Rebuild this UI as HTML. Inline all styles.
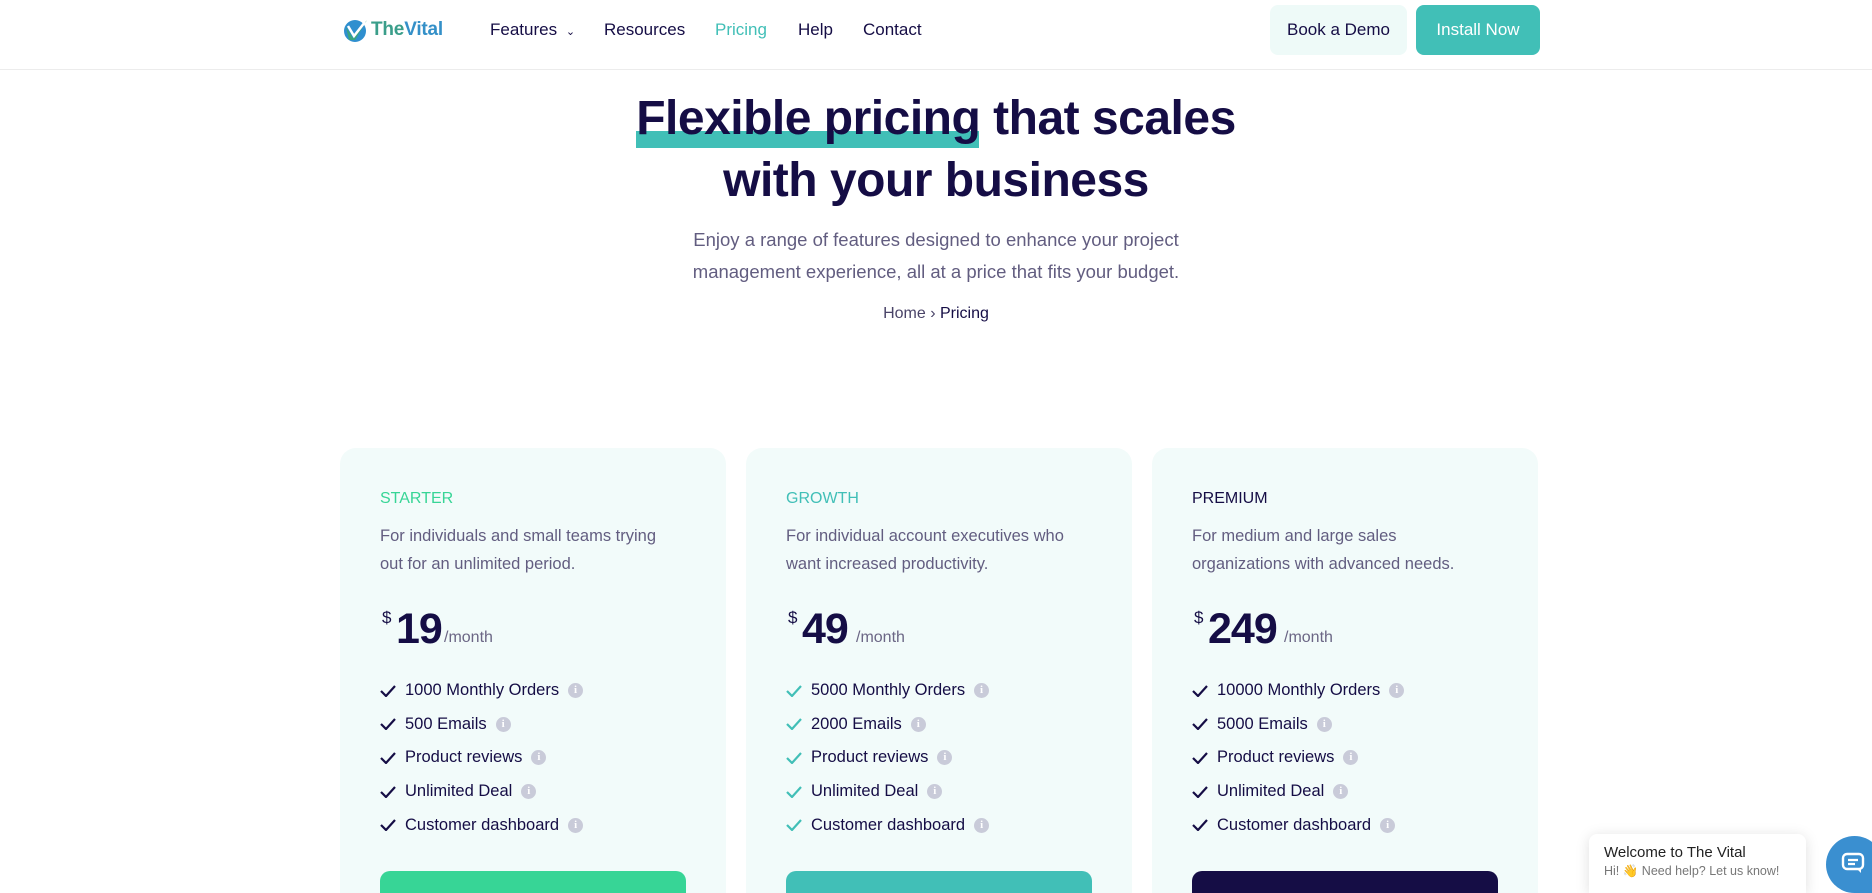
<!DOCTYPE html>
<html><head><meta charset="utf-8"><style>
*{margin:0;padding:0;box-sizing:border-box}
html,body{width:1872px;height:893px;overflow:hidden}
body{background:#fff;font-family:"Liberation Sans",sans-serif;color:#150d45;position:relative}
.abs{position:absolute}
.nav a{position:absolute;top:20px;font-size:17px;color:#150d45;text-decoration:none;white-space:nowrap}
.hdr{position:absolute;left:0;top:69px;width:1872px;height:1px;background:#ececec}
.btn{position:absolute;top:5px;height:50px;border-radius:8px;font-size:17px;display:flex;align-items:center;justify-content:center}
h1{position:absolute;left:0;width:1872px;top:88px;text-align:center;font-size:48px;letter-spacing:-0.5px;line-height:62px;font-weight:bold;color:#150d45}
.bar{position:absolute;left:636px;top:131px;width:343px;height:17px;background:#41bfb7}
.sub{position:absolute;left:0;width:1872px;top:224px;text-align:center;font-size:18.5px;line-height:32px;color:#625d80}
.bc{position:absolute;left:0;width:1872px;top:305px;text-align:center;font-size:16px;color:#4a4468}
.card{position:absolute;top:448px;width:386px;height:445px;background:#f2fbfa;border-radius:16px 16px 0 0;overflow:hidden}
.card .tt{position:absolute;left:40px;top:42px;font-size:16px}
.card .d{position:absolute;left:40px;top:74px;font-size:16.5px;line-height:28px;color:#625d80;width:290px}
.card .p{position:absolute;left:40px;top:160px;white-space:nowrap}
.p .s{position:absolute;left:2px;top:0px;font-size:17px}
.p .n{position:absolute;left:16px;top:-3px;font-size:43px;font-weight:bold;letter-spacing:-1px}
.p .m{position:absolute;top:21px;font-size:16px;color:#6b6685}
.card ul{position:absolute;left:40px;top:226px;list-style:none}
.card li{height:33.6px;display:flex;align-items:center;font-size:16.5px;color:#150d45;white-space:nowrap}
.card li svg.c{margin-right:9px}
.i{display:inline-block;width:15px;height:15px;border-radius:50%;background:#c9cbd9;color:#fff;font-size:11px;font-weight:bold;text-align:center;line-height:15px;margin-left:9px;font-family:"Liberation Serif",serif}
.cb{position:absolute;left:40px;top:423px;width:306px;height:60px;border-radius:10px}
</style></head><body>
<svg class="abs" style="left:343px;top:18px" width="26" height="25" viewBox="0 0 26 25"><circle cx="12" cy="13" r="11" fill="#2f8fcf"/><path d="M3 9 L10 20 L24 2 L12 22 L6 22 Z" fill="#3aa480"/><path d="M5 8 L11 18 L22 4" stroke="#fff" stroke-width="2.5" fill="none"/></svg>
<div class="abs" style="left:371px;top:19px;font-size:19px;font-weight:bold;letter-spacing:-.2px"><span style="color:#3a9e8a">The</span><span style="color:#3490c8">Vital</span></div>
<div class="nav">
<a style="left:490px">Features <span style="font-size:11px;margin-left:4px">&#8964;</span></a>
<a style="left:604px">Resources</a>
<a style="left:715px;color:#41bfb7">Pricing</a>
<a style="left:798px">Help</a>
<a style="left:863px">Contact</a>
</div>
<div class="btn" style="left:1270px;width:137px;background:#eefaf8;color:#150d45">Book a Demo</div>
<div class="btn" style="left:1416px;width:124px;background:#41bfb7;color:#fff">Install Now</div>
<div class="hdr"></div>
<div class="bar"></div>
<h1>Flexible pricing that scales<br>with your business</h1>
<div class="sub">Enjoy a range of features designed to enhance your project<br>management experience, all at a price that fits your budget.</div>
<div class="bc">Home &rsaquo; <span style="color:#150d45">Pricing</span></div>

<div class="card" style="left:340px">
<div class="tt" style="color:#37d596">STARTER</div>
<div class="d">For individuals and small teams trying out for an unlimited period.</div>
<div class="p"><span class="s">$</span><span class="n">19</span><span class="m" style="left:64px">/month</span></div>
<ul>
<li><svg class="c" width="16" height="12"><path d="M1 6 L6 11 L15 1" stroke="#150d45" stroke-width="2.2" fill="none"/></svg>1000 Monthly Orders<span class="i">i</span></li>
<li><svg class="c" width="16" height="12"><path d="M1 6 L6 11 L15 1" stroke="#150d45" stroke-width="2.2" fill="none"/></svg>500 Emails<span class="i">i</span></li>
<li><svg class="c" width="16" height="12"><path d="M1 6 L6 11 L15 1" stroke="#150d45" stroke-width="2.2" fill="none"/></svg>Product reviews<span class="i">i</span></li>
<li><svg class="c" width="16" height="12"><path d="M1 6 L6 11 L15 1" stroke="#150d45" stroke-width="2.2" fill="none"/></svg>Unlimited Deal<span class="i">i</span></li>
<li><svg class="c" width="16" height="12"><path d="M1 6 L6 11 L15 1" stroke="#150d45" stroke-width="2.2" fill="none"/></svg>Customer dashboard<span class="i">i</span></li>
</ul>
<div class="cb" style="background:#37d596"></div>
</div>

<div class="card" style="left:746px">
<div class="tt" style="color:#41bfb7">GROWTH</div>
<div class="d">For individual account executives who want increased productivity.</div>
<div class="p"><span class="s">$</span><span class="n">49</span><span class="m" style="left:70px">/month</span></div>
<ul>
<li><svg class="c" width="16" height="12"><path d="M1 6 L6 11 L15 1" stroke="#41bfb7" stroke-width="2.2" fill="none"/></svg>5000 Monthly Orders<span class="i">i</span></li>
<li><svg class="c" width="16" height="12"><path d="M1 6 L6 11 L15 1" stroke="#41bfb7" stroke-width="2.2" fill="none"/></svg>2000 Emails<span class="i">i</span></li>
<li><svg class="c" width="16" height="12"><path d="M1 6 L6 11 L15 1" stroke="#41bfb7" stroke-width="2.2" fill="none"/></svg>Product reviews<span class="i">i</span></li>
<li><svg class="c" width="16" height="12"><path d="M1 6 L6 11 L15 1" stroke="#41bfb7" stroke-width="2.2" fill="none"/></svg>Unlimited Deal<span class="i">i</span></li>
<li><svg class="c" width="16" height="12"><path d="M1 6 L6 11 L15 1" stroke="#41bfb7" stroke-width="2.2" fill="none"/></svg>Customer dashboard<span class="i">i</span></li>
</ul>
<div class="cb" style="background:#41bfb7"></div>
</div>

<div class="card" style="left:1152px">
<div class="tt" style="color:#150d45">PREMIUM</div>
<div class="d" style="width:270px">For medium and large sales organizations with advanced needs.</div>
<div class="p"><span class="s">$</span><span class="n">249</span><span class="m" style="left:92px">/month</span></div>
<ul>
<li><svg class="c" width="16" height="12"><path d="M1 6 L6 11 L15 1" stroke="#150d45" stroke-width="2.2" fill="none"/></svg>10000 Monthly Orders<span class="i">i</span></li>
<li><svg class="c" width="16" height="12"><path d="M1 6 L6 11 L15 1" stroke="#150d45" stroke-width="2.2" fill="none"/></svg>5000 Emails<span class="i">i</span></li>
<li><svg class="c" width="16" height="12"><path d="M1 6 L6 11 L15 1" stroke="#150d45" stroke-width="2.2" fill="none"/></svg>Product reviews<span class="i">i</span></li>
<li><svg class="c" width="16" height="12"><path d="M1 6 L6 11 L15 1" stroke="#150d45" stroke-width="2.2" fill="none"/></svg>Unlimited Deal<span class="i">i</span></li>
<li><svg class="c" width="16" height="12"><path d="M1 6 L6 11 L15 1" stroke="#150d45" stroke-width="2.2" fill="none"/></svg>Customer dashboard<span class="i">i</span></li>
</ul>
<div class="cb" style="background:#150d45"></div>
</div>

<div class="abs" style="left:1589px;top:834px;width:217px;height:59px;background:#fff;border-radius:8px 8px 0 0;box-shadow:0 2px 14px rgba(0,0,0,.13);padding:10px 15px">
<div style="font-size:15px;color:#222">Welcome to The Vital</div>
<div style="font-size:12.5px;color:#777;margin-top:3px;white-space:nowrap">Hi! 👋 Need help? Let us know!</div>
</div>
<div class="abs" style="left:1826px;top:836px;width:57px;height:57px;border-radius:50% 50% 0 50%;background:#3a8fd0"></div>
<svg class="abs" style="left:1841px;top:852px" width="24" height="22" viewBox="0 0 24 22"><rect x="2" y="2" width="20" height="15" rx="4" fill="none" stroke="#fff" stroke-width="2.4"/><path d="M7 8 H17 M7 12 H14" stroke="#fff" stroke-width="2.2"/><path d="M16 17 L20 21 L20 17" fill="#fff"/></svg>
</body></html>
